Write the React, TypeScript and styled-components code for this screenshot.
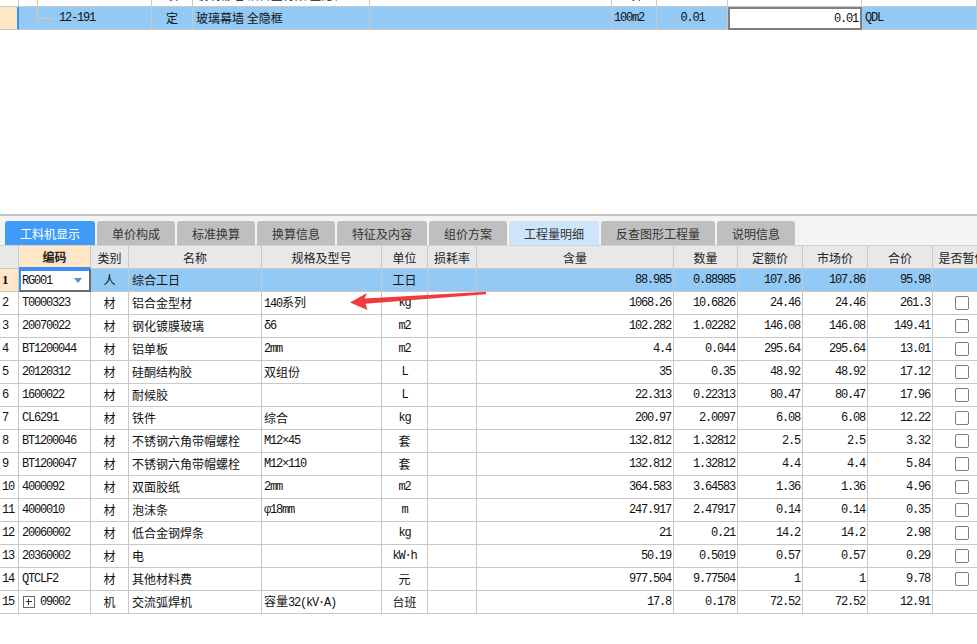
import React from 'react';
import styled, { createGlobalStyle } from 'styled-components';

const GlobalStyle = createGlobalStyle`
  html, body { margin: 0; padding: 0; background: #ffffff; }
  body { width: 977px; height: 644px; overflow: hidden; font-family: "Noto Sans CJK SC", sans-serif; }
  * { box-sizing: border-box; }
`;

const LINE = '#c8c8c8';
const SEL_BG = '#93c9f5';
const BEIGE = '#ffe6c6';
const BLUE = '#3c8ff5';

const TOP_COLS = '19px 133px 41px 177px 242px 45px 71px 134px 115px';
const GRID_COLS = '19px 72px 38px 133px 120px 46px 49px 197px 64px 65px 65px 65px 60px';

const Page = styled.div`
  position: relative;
  width: 977px;
  height: 644px;
  overflow: hidden;
  display: flex;
  flex-direction: column;
  background: #ffffff;
  color: #111;
`;

const Han = styled.span`
  font-family: "Noto Sans CJK SC", sans-serif;
  font-size: 12px;
  line-height: 14px;
  letter-spacing: 0;
`;

const Lat = styled.span`
  font-family: "Liberation Mono", monospace;
  font-size: 12px;
  line-height: 14px;
  letter-spacing: -1.2px;
`;

const IndexBold = styled.span`
  font-family: "Liberation Serif", serif;
  font-size: 13px;
  line-height: 14px;
  font-weight: 700;
`;

const MixLine = styled.span`
  display: inline-flex;
  align-items: baseline;
  white-space: nowrap;
  line-height: 14px;
`;

const HAN_SPLIT = /([\u2E80-\u9FFF\uFF00-\uFFEF]+)/;
const HAN_TEST = /^[\u2E80-\u9FFF\uFF00-\uFFEF]+$/;

function Mixed({ text }: { text: string }) {
  return (
    <MixLine>
      {text
        .split(HAN_SPLIT)
        .filter(Boolean)
        .map((part, i) => (HAN_TEST.test(part) ? <Han key={i}>{part}</Han> : <Lat key={i}>{part}</Lat>))}
    </MixLine>
  );
}

/* ---------- top panel ---------- */

const TopPanel = styled.div`
  flex: none;
  height: 214px;
  overflow: hidden;
  background: #ffffff;
`;

const TopScroll = styled.div`
  margin-top: -16px;
  display: flex;
  flex-direction: column;
`;

const TopRow = styled.div`
  display: grid;
  grid-template-columns: ${TOP_COLS};
  height: 23px;
`;

type Align = 'left' | 'center' | 'right';
const justify = (a?: Align) => (a === 'center' ? 'center' : a === 'right' ? 'flex-end' : 'flex-start');

const TopCell = styled.div<{ $bg?: string; $align?: Align; $pl?: number; $pr?: number }>`
  position: relative;
  display: flex;
  align-items: center;
  justify-content: ${(p) => justify(p.$align)};
  padding-left: ${(p) => p.$pl ?? 3}px;
  padding-right: ${(p) => p.$pr ?? 2}px;
  background: ${(p) => p.$bg ?? '#ffffff'};
  border-right: 1px solid ${LINE};
  border-bottom: 1px solid ${LINE};
  white-space: nowrap;
  overflow: hidden;
`;

const TopIndexCell = styled(TopCell)<{ $marked?: boolean }>`
  border-right: ${(p) => (p.$marked ? `2px solid ${BLUE}` : `1px solid ${LINE}`)};
`;

const TreeStem = styled.span`
  position: absolute;
  left: 18px;
  top: 0;
  bottom: -1px;
  width: 1px;
  background: #f3c27c;
`;

const TreeElbow = styled.span`
  position: absolute;
  left: 18px;
  top: 0;
  width: 16px;
  height: 12px;
  border-left: 1px solid #f3c27c;
  border-bottom: 1px solid #f3c27c;
`;

const EditBox = styled.div`
  display: flex;
  align-items: center;
  justify-content: flex-end;
  padding-right: 2px;
  background: #ffffff;
  border: 2px solid #808080;
  white-space: nowrap;
`;

/* ---------- lower panel ---------- */

const Divider = styled.div`
  flex: none;
  height: 2px;
  background: #c4c4c4;
`;

const LowerPanel = styled.div`
  flex: 1;
  display: flex;
  flex-direction: column;
  background: #f3f3f3;
  padding-top: 5px;
  min-height: 0;
`;

const TabBar = styled.div`
  flex: none;
  display: flex;
  gap: 2px;
  padding-left: 5px;
  height: 24px;
`;

type TabKind = 'active' | 'light' | 'plain';
const Tab = styled.div<{ $w: number; $kind: TabKind }>`
  width: ${(p) => p.$w}px;
  height: 24px;
  display: flex;
  align-items: center;
  justify-content: center;
  border-radius: 3px 3px 0 0;
  font-size: 12px;
  background: ${(p) => (p.$kind === 'active' ? '#409bf6' : p.$kind === 'light' ? '#cce5fb' : '#bfbfbf')};
  color: ${(p) => (p.$kind === 'active' ? '#ffffff' : '#333333')};
  white-space: nowrap;
`;

const Grid = styled.div`
  flex: 1;
  display: flex;
  flex-direction: column;
  background: #ffffff;
  border-top: 1px solid #d2d2d2;
  overflow: hidden;
`;

const HeaderRow = styled.div`
  flex: none;
  display: grid;
  grid-template-columns: ${GRID_COLS};
  height: 23px;
`;

const HeadCell = styled.div<{ $active?: boolean }>`
  display: flex;
  align-items: center;
  justify-content: center;
  font-size: 12px;
  color: #222;
  font-weight: ${(p) => (p.$active ? 700 : 400)};
  background: ${(p) => (p.$active ? BEIGE : '#e8e8e8')};
  border-right: 1px solid ${LINE};
  border-bottom: ${(p) => (p.$active ? `2px solid ${BLUE}` : `1px solid ${LINE}`)};
  white-space: nowrap;
  overflow: hidden;
`;

const DataRow = styled.div`
  flex: none;
  display: grid;
  grid-template-columns: ${GRID_COLS};
  height: 23px;
`;

const Cell = styled.div<{ $bg?: string; $align?: Align; $pl?: number; $pr?: number }>`
  display: flex;
  align-items: center;
  justify-content: ${(p) => justify(p.$align)};
  padding-left: ${(p) => p.$pl ?? 3}px;
  padding-right: ${(p) => p.$pr ?? 2}px;
  background: ${(p) => p.$bg ?? '#ffffff'};
  border-right: 1px solid ${LINE};
  border-bottom: 1px solid ${LINE};
  white-space: nowrap;
  overflow: hidden;
`;

const FocusCell = styled.div`
  display: flex;
  align-items: center;
  justify-content: space-between;
  padding-left: 1px;
  padding-right: 7px;
  background: #ffffff;
  border-top: 2px solid ${BLUE};
  border-left: 2px solid ${BLUE};
  border-right: 2px solid #6a6a6a;
  border-bottom: 2px solid #6a6a6a;
  white-space: nowrap;
`;

const DropArrow = styled.span`
  width: 0;
  height: 0;
  border-left: 4px solid transparent;
  border-right: 4px solid transparent;
  border-top: 5px solid #5c8fcb;
`;

const CheckBox = styled.span`
  width: 14px;
  height: 14px;
  border: 1px solid #7c7c7c;
  border-radius: 2px;
  background: #ffffff;
`;

const ExpandBox = styled.span`
  width: 12px;
  height: 12px;
  margin-left: 1px;
  margin-right: 5px;
  border: 1px solid #666;
  position: relative;
  &::before {
    content: '';
    position: absolute;
    left: 2px;
    right: 2px;
    top: 4px;
    height: 1px;
    background: #333;
  }
  &::after {
    content: '';
    position: absolute;
    top: 2px;
    bottom: 2px;
    left: 4px;
    width: 1px;
    background: #333;
  }
`;

const Arrow = styled.svg`
  position: absolute;
  left: 340px;
  top: 285px;
  pointer-events: none;
`;

type Row = {
  n: number;
  code: string;
  type: string;
  name: string;
  spec: string;
  unit: string;
  qty: string;
  num: string;
  de: string;
  sc: string;
  hj: string;
  cb: boolean;
  expand?: boolean;
};

const rows: Row[] = [
  { n: 1, code: 'RG001', type: '人', name: '综合工日', spec: '', unit: '工日', qty: '88.985', num: '0.88985', de: '107.86', sc: '107.86', hj: '95.98', cb: false },
  { n: 2, code: 'T0000323', type: '材', name: '铝合金型材', spec: '140系列', unit: 'kg', qty: '1068.26', num: '10.6826', de: '24.46', sc: '24.46', hj: '261.3', cb: true },
  { n: 3, code: '20070022', type: '材', name: '钢化镀膜玻璃', spec: 'δ6', unit: 'm2', qty: '102.282', num: '1.02282', de: '146.08', sc: '146.08', hj: '149.41', cb: true },
  { n: 4, code: 'BT1200044', type: '材', name: '铝单板', spec: '2mm', unit: 'm2', qty: '4.4', num: '0.044', de: '295.64', sc: '295.64', hj: '13.01', cb: true },
  { n: 5, code: '20120312', type: '材', name: '硅酮结构胶', spec: '双组份', unit: 'L', qty: '35', num: '0.35', de: '48.92', sc: '48.92', hj: '17.12', cb: true },
  { n: 6, code: '1600022', type: '材', name: '耐候胶', spec: '', unit: 'L', qty: '22.313', num: '0.22313', de: '80.47', sc: '80.47', hj: '17.96', cb: true },
  { n: 7, code: 'CL6291', type: '材', name: '铁件', spec: '综合', unit: 'kg', qty: '200.97', num: '2.0097', de: '6.08', sc: '6.08', hj: '12.22', cb: true },
  { n: 8, code: 'BT1200046', type: '材', name: '不锈钢六角带帽螺栓', spec: 'M12×45', unit: '套', qty: '132.812', num: '1.32812', de: '2.5', sc: '2.5', hj: '3.32', cb: true },
  { n: 9, code: 'BT1200047', type: '材', name: '不锈钢六角带帽螺栓', spec: 'M12×110', unit: '套', qty: '132.812', num: '1.32812', de: '4.4', sc: '4.4', hj: '5.84', cb: true },
  { n: 10, code: '4000092', type: '材', name: '双面胶纸', spec: '2mm', unit: 'm2', qty: '364.583', num: '3.64583', de: '1.36', sc: '1.36', hj: '4.96', cb: true },
  { n: 11, code: '4000010', type: '材', name: '泡沫条', spec: 'φ18mm', unit: 'm', qty: '247.917', num: '2.47917', de: '0.14', sc: '0.14', hj: '0.35', cb: true },
  { n: 12, code: '20060002', type: '材', name: '低合金钢焊条', spec: '', unit: 'kg', qty: '21', num: '0.21', de: '14.2', sc: '14.2', hj: '2.98', cb: true },
  { n: 13, code: '20360002', type: '材', name: '电', spec: '', unit: 'kW·h', qty: '50.19', num: '0.5019', de: '0.57', sc: '0.57', hj: '0.29', cb: true },
  { n: 14, code: 'QTCLF2', type: '材', name: '其他材料费', spec: '', unit: '元', qty: '977.504', num: '9.77504', de: '1', sc: '1', hj: '9.78', cb: true },
  { n: 15, code: '09002', type: '机', name: '交流弧焊机', spec: '容量32(kV·A)', unit: '台班', qty: '17.8', num: '0.178', de: '72.52', sc: '72.52', hj: '12.91', cb: false, expand: true },
];

const headers = ['', '编码', '类别', '名称', '规格及型号', '单位', '损耗率', '含量', '数量', '定额价', '市场价', '合价', '是否暂估'];

const tabs: { label: string; w: number; kind: TabKind }[] = [
  { label: '工料机显示', w: 90, kind: 'active' },
  { label: '单价构成', w: 78, kind: 'plain' },
  { label: '标准换算', w: 78, kind: 'plain' },
  { label: '换算信息', w: 78, kind: 'plain' },
  { label: '特征及内容', w: 90, kind: 'plain' },
  { label: '组价方案', w: 78, kind: 'plain' },
  { label: '工程量明细', w: 90, kind: 'light' },
  { label: '反查图形工程量', w: 114, kind: 'plain' },
  { label: '说明信息', w: 78, kind: 'plain' },
];

function DataLine({ r }: { r: Row }) {
  const sel = r.n === 1;
  const bg = sel ? SEL_BG : '#ffffff';
  return (
    <DataRow>
      <Cell $bg={sel ? BEIGE : '#ffffff'} $pl={2}>
        {sel ? <IndexBold>1</IndexBold> : <Lat>{r.n}</Lat>}
      </Cell>
      {sel ? (
        <FocusCell>
          <Lat>{r.code}</Lat>
          <DropArrow />
        </FocusCell>
      ) : (
        <Cell $bg={bg}>
          {r.expand && <ExpandBox />}
          <Lat>{r.code}</Lat>
        </Cell>
      )}
      <Cell $bg={bg} $align="center" $pl={0} $pr={0}>
        <Han>{r.type}</Han>
      </Cell>
      <Cell $bg={bg}>
        <Han>{r.name}</Han>
      </Cell>
      <Cell $bg={bg} $pl={2}>
        <Mixed text={r.spec} />
      </Cell>
      <Cell $bg={bg} $align="center" $pl={0} $pr={0}>
        <Mixed text={r.unit} />
      </Cell>
      <Cell $bg={bg} />
      <Cell $bg={bg} $align="right">
        <Lat>{r.qty}</Lat>
      </Cell>
      <Cell $bg={bg} $align="right">
        <Lat>{r.num}</Lat>
      </Cell>
      <Cell $bg={bg} $align="right">
        <Lat>{r.de}</Lat>
      </Cell>
      <Cell $bg={bg} $align="right">
        <Lat>{r.sc}</Lat>
      </Cell>
      <Cell $bg={bg} $align="right">
        <Lat>{r.hj}</Lat>
      </Cell>
      <Cell $bg={bg} $pl={22}>
        {r.cb && <CheckBox />}
      </Cell>
    </DataRow>
  );
}

export default function App() {
  return (
    <Page>
      <GlobalStyle />
      <TopPanel>
        <TopScroll>
          <TopRow>
            <TopIndexCell />
            <TopCell>
              <TreeStem />
            </TopCell>
            <TopCell $align="center" $pl={0} $pr={0}>
              <Han>项</Han>
            </TopCell>
            <TopCell>
              <Han>玻璃幕墙 铝合金骨架 全隐框</Han>
            </TopCell>
            <TopCell />
            <TopCell $align="center">
              <Han>项</Han>
            </TopCell>
            <TopCell />
            <TopCell />
            <TopCell />
          </TopRow>
          <TopRow>
            <TopIndexCell $bg={BEIGE} $marked />
            <TopCell $bg={SEL_BG} $pl={40}>
              <TreeElbow />
              <Lat>12-191</Lat>
            </TopCell>
            <TopCell $bg={SEL_BG} $align="center" $pl={0} $pr={0}>
              <Han>定</Han>
            </TopCell>
            <TopCell $bg={SEL_BG}>
              <Han>玻璃幕墙 全隐框</Han>
            </TopCell>
            <TopCell $bg={SEL_BG} />
            <TopCell $bg={SEL_BG} $pl={2}>
              <Lat>100m2</Lat>
            </TopCell>
            <TopCell $bg={SEL_BG} $align="center">
              <Lat>0.01</Lat>
            </TopCell>
            <EditBox>
              <Lat>0.01</Lat>
            </EditBox>
            <TopCell $bg={SEL_BG} $pl={3}>
              <Lat>QDL</Lat>
            </TopCell>
          </TopRow>
        </TopScroll>
      </TopPanel>
      <Divider />
      <LowerPanel>
        <TabBar>
          {tabs.map((t) => (
            <Tab key={t.label} $w={t.w} $kind={t.kind}>
              {t.label}
            </Tab>
          ))}
        </TabBar>
        <Grid>
          <HeaderRow>
            {headers.map((h, i) => (
              <HeadCell key={i} $active={i === 1}>
                {h}
              </HeadCell>
            ))}
          </HeaderRow>
          {rows.map((r) => (
            <DataLine key={r.n} r={r} />
          ))}
        </Grid>
      </LowerPanel>
      <Arrow width="150" height="30" viewBox="340 285 150 30">
        <polygon
          points="350,302.5 367,293 364.5,298.5 486,291.8 486,294.2 365.5,303.8 367.5,310"
          fill="#ee3b3b"
        />
      </Arrow>
    </Page>
  );
}
